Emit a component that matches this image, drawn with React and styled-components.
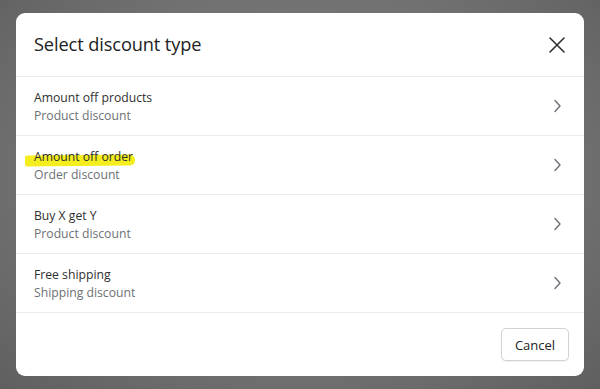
import React from 'react';
import styled, { createGlobalStyle } from 'styled-components';

const GlobalStyle = createGlobalStyle`
  html, body {
    margin: 0;
    padding: 0;
  }
  body {
    font-family: 'Open Sans', 'Noto Sans', Arial, sans-serif;
    -webkit-font-smoothing: antialiased;
  }
`;

const Backdrop = styled.div`
  width: 600px;
  height: 389px;
  box-sizing: border-box;
  padding: 13px 16px;
  background: radial-gradient(ellipse at 50% 45%, #7c7c7c 0%, #727272 60%, #5f5f5f 100%);
`;

const Modal = styled.div`
  width: 568px;
  height: 363px;
  background: #ffffff;
  border-radius: 9px;
  overflow: hidden;
  display: flex;
  flex-direction: column;
`;

const Header = styled.div`
  height: 63px;
  display: flex;
  align-items: center;
  justify-content: space-between;
  padding: 0 17px 0 18px;
  border-bottom: 1px solid #ebebeb;
  flex-shrink: 0;
`;

const Title = styled.h1`
  margin: 0 0 1px;
  font-size: 18.2px;
  font-weight: 500;
  color: #202223;
  letter-spacing: -0.1px;
`;

const CloseButton = styled.button`
  border: none;
  background: none;
  padding: 0;
  width: 20px;
  height: 20px;
  display: flex;
  align-items: center;
  justify-content: center;
  color: #303030;
  cursor: pointer;
`;

const List = styled.div`
  display: flex;
  flex-direction: column;
`;

const Row = styled.div`
  height: 58px;
  box-sizing: content-box;
  display: flex;
  align-items: center;
  justify-content: space-between;
  padding: 0 22px 0 18px;
  border-bottom: 1px solid #ebebeb;
  cursor: pointer;
`;

const RowText = styled.div`
  display: flex;
  flex-direction: column;
  padding-top: 1px;
`;

const RowTitle = styled.span`
  font-size: 12.2px;
  line-height: 18px;
  color: #303030;
`;

const RowSubtitle = styled.span`
  font-size: 12.2px;
  line-height: 18px;
  color: #6d7175;
`;

const Mark = styled.span`
  position: relative;
  z-index: 0;

  &::before {
    content: '';
    position: absolute;
    z-index: -1;
    left: -9px;
    right: -2px;
    top: 7px;
    height: 11px;
    background: #f5ee1e;
    border-radius: 2px 5px 5px 2px;
    transform: rotate(-0.6deg);
  }
`;

const Footer = styled.div`
  flex: 1;
  display: flex;
  align-items: center;
  justify-content: flex-end;
  padding: 0 15px;
`;

const Button = styled.button`
  height: 33px;
  width: 68px;
  border: 1px solid #d2d2d2;
  border-radius: 5px;
  background: #ffffff;
  font-family: inherit;
  font-size: 13px;
  color: #202223;
  box-shadow: 0 1px 0 rgba(0, 0, 0, 0.05);
  cursor: pointer;
`;

const options = [
  { title: 'Amount off products', subtitle: 'Product discount' },
  { title: 'Amount off order', subtitle: 'Order discount', marked: true },
  { title: 'Buy X get Y', subtitle: 'Product discount' },
  { title: 'Free shipping', subtitle: 'Shipping discount' },
];

const CloseIcon = () => (
  <svg width="16" height="16" viewBox="0 0 16 16" fill="none">
    <path d="M1 1L15 15M15 1L1 15" stroke="currentColor" strokeWidth="1.6" strokeLinecap="round" />
  </svg>
);

const Chevron = () => (
  <svg width="10" height="14" viewBox="0 0 10 14" fill="none">
    <path d="M3 1.5L8 7L3 12.5" stroke="#6d7175" strokeWidth="1.4" strokeLinecap="round" strokeLinejoin="round" />
  </svg>
);

const App = () => (
  <>
    <GlobalStyle />
    <Backdrop>
      <Modal>
        <Header>
          <Title>Select discount type</Title>
          <CloseButton aria-label="Close">
            <CloseIcon />
          </CloseButton>
        </Header>
        <List>
          {options.map((opt) => (
            <Row key={opt.title}>
              <RowText>
                <RowTitle>{opt.marked ? <Mark>{opt.title}</Mark> : opt.title}</RowTitle>
                <RowSubtitle>{opt.subtitle}</RowSubtitle>
              </RowText>
              <Chevron />
            </Row>
          ))}
        </List>
        <Footer>
          <Button>Cancel</Button>
        </Footer>
      </Modal>
    </Backdrop>
  </>
);

export default App;
